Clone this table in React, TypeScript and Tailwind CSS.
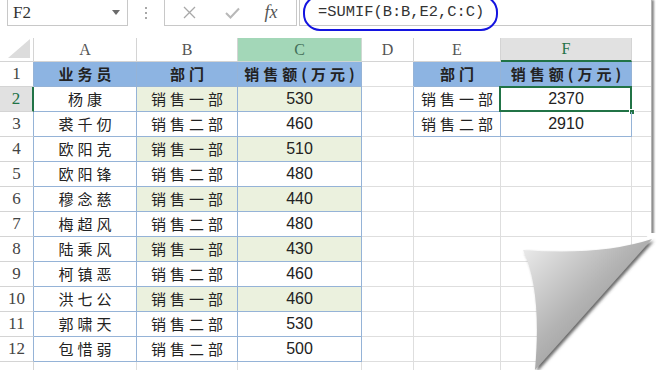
import * as React from "react";

type Row = { name: string; dept: string; amount: number };

const ROWS: Row[] = [
  { name: "杨康", dept: "销售一部", amount: 530 },
  { name: "裘千仞", dept: "销售二部", amount: 460 },
  { name: "欧阳克", dept: "销售一部", amount: 510 },
  { name: "欧阳锋", dept: "销售二部", amount: 480 },
  { name: "穆念慈", dept: "销售一部", amount: 440 },
  { name: "梅超风", dept: "销售二部", amount: 480 },
  { name: "陆乘风", dept: "销售一部", amount: 430 },
  { name: "柯镇恶", dept: "销售二部", amount: 460 },
  { name: "洪七公", dept: "销售一部", amount: 460 },
  { name: "郭啸天", dept: "销售二部", amount: 530 },
  { name: "包惜弱", dept: "销售二部", amount: 500 },
];

const SUMMARY = [
  { dept: "销售一部", total: 2370 },
  { dept: "销售二部", total: 2910 },
];

const CJK = "font-[family-name:'Noto_Sans_CJK_SC',sans-serif] text-[15px] tracking-[4px] pl-[4px]";
const NUM = "font-[family-name:'Liberation_Sans',sans-serif] text-[16px]";
const SERIF = "font-[family-name:'Liberation_Serif',serif]";

function Cell({ className = "", children }: { className?: string; children?: React.ReactNode }) {
  return (
    <div className={`flex h-[25px] items-center justify-center border-r border-b text-[#222] ${className}`}>
      {children}
    </div>
  );
}

function TopBar() {
  return (
    <div className="relative flex h-[26px] items-stretch">
      <div className="ml-[7px] flex w-[121px] items-center justify-between border-x border-b border-[#c8c8c8] pl-[5px] pr-[7px]">
        <span className={`${SERIF} text-[17px] text-[#333]`}>F2</span>
        <svg width="8" height="5" viewBox="0 0 8 5">
          <path d="M0 0 L8 0 L4 5 Z" fill="#6b6b6b" />
        </svg>
      </div>
      <div className="flex w-[36px] flex-col items-center justify-center gap-[3px]">
        <span className="h-[2px] w-[2px] bg-[#a8a8a8]" />
        <span className="h-[2px] w-[2px] bg-[#a8a8a8]" />
        <span className="h-[2px] w-[2px] bg-[#a8a8a8]" />
      </div>
      <div className="flex w-[133px] items-center border-x border-b border-[#c8c8c8]">
        <div className="flex w-[48px] justify-center">
          <svg width="13" height="13" viewBox="0 0 13 13">
            <path d="M1 1 L12 12 M12 1 L1 12" stroke="#a8a8a8" strokeWidth="1.3" />
          </svg>
        </div>
        <div className="flex w-[38px] justify-center">
          <svg width="15" height="12" viewBox="0 0 15 12">
            <path d="M1 6 L5.5 10.5 L14 1.5" stroke="#b8b8b8" strokeWidth="2" fill="none" />
          </svg>
        </div>
        <div className="flex w-[40px] justify-center">
          <span className={`${SERIF} text-[18px] italic text-[#555]`}>fx</span>
        </div>
      </div>
      <div className="ml-[2px] flex flex-1 items-center border-l border-b border-[#c8c8c8] pl-[18px]">
        <span className="font-[family-name:'Liberation_Mono',monospace] text-[15.4px] text-[#333]">=SUMIF(B:B,E2,C:C)</span>
      </div>
      <div className="absolute left-[303px] top-[-5px] h-[36px] w-[195px] rounded-[17px] border-2 border-[#1414e0]" />
    </div>
  );
}

function Sheet() {
  const colHead = `${SERIF} text-[16px] text-[#555]`;
  return (
    <div className="grid grid-cols-[34px_103px_101px_124px_52px_87px_131px_19px]">
      {/* column headers */}
      <div className="relative h-[24px] border-r border-b border-[#d4d4d4]">
        <svg className="absolute bottom-[3px] right-[3px]" width="22" height="19" viewBox="0 0 22 19">
          <path d="M22 0 L22 19 L0 19 Z" fill="#dcdcdc" />
        </svg>
      </div>
      <div className={`flex h-[24px] items-center justify-center border-r border-b border-[#d4d4d4] ${colHead}`}>A</div>
      <div className={`flex h-[24px] items-center justify-center border-r border-b border-[#d4d4d4] ${colHead}`}>B</div>
      <div className={`flex h-[24px] items-center justify-center border-r border-b border-[#cfd8d2] bg-[#a3d7b8] ${SERIF} text-[16px] text-[#44705a]`}>C</div>
      <div className={`flex h-[24px] items-center justify-center border-r border-b border-[#d4d4d4] ${colHead}`}>D</div>
      <div className={`flex h-[24px] items-center justify-center border-r border-b border-[#d4d4d4] ${colHead}`}>E</div>
      <div className={`flex h-[24px] items-center justify-center border-r border-b-2 border-r-[#d4d4d4] border-b-[#217346] bg-[#e1e1e1] ${SERIF} text-[16px] text-[#217346]`}>F</div>
      <div className="h-[24px] border-b border-[#d4d4d4]" />

      {/* row 1: headers */}
      <Cell className={`border-[#95b3d7] border-b-[#d4d4d4] ${SERIF} text-[17px] !text-[#444]`}>1</Cell>
      <Cell className={`border-[#95b3d7] bg-[#8db4e2] ${CJK} font-bold`}>业务员</Cell>
      <Cell className={`border-[#95b3d7] bg-[#8db4e2] ${CJK} font-bold`}>部门</Cell>
      <Cell className={`border-[#95b3d7] bg-[#8db4e2] ${CJK} font-bold tracking-[2px] pl-[2px]`}>销售额(万元)</Cell>
      <Cell className="border-r-[#95b3d7] border-b-[#dedede]" />
      <Cell className={`border-[#95b3d7] bg-[#8db4e2] ${CJK} font-bold`}>部门</Cell>
      <Cell className={`border-[#95b3d7] bg-[#8db4e2] ${CJK} font-bold tracking-[2px] pl-[2px]`}>销售额(万元)</Cell>
      <Cell className="border-[#dedede] border-r-0" />

      {ROWS.map((r, i) => {
        const n = i + 2;
        const one = r.dept === "销售一部";
        const tint = one ? "bg-[#ebf1de]" : "bg-white";
        const sum = SUMMARY[i];
        return (
          <React.Fragment key={n}>
            {n === 2 ? (
              <Cell className={`border-r-2 border-r-[#217346] border-b-[#d4d4d4] bg-[#e1e1e1] ${SERIF} text-[17px] !text-[#217346]`}>{n}</Cell>
            ) : (
              <Cell className={`border-r-[#95b3d7] border-b-[#d4d4d4] ${SERIF} text-[17px] !text-[#444]`}>{n}</Cell>
            )}
            <Cell className={`border-[#95b3d7] ${CJK}`}>{r.name}</Cell>
            <Cell className={`border-[#95b3d7] ${tint} ${CJK}`}>{r.dept}</Cell>
            <Cell className={`border-[#95b3d7] ${tint} ${NUM}`}>{r.amount}</Cell>
            {sum ? (
              <>
                <Cell className="border-r-[#95b3d7] border-b-[#dedede]" />
                <Cell className={`border-[#95b3d7] ${CJK}`}>{sum.dept}</Cell>
                <Cell className={`relative border-[#95b3d7] ${NUM}`}>
                  {sum.total}
                  {i === 0 ? (
                    <>
                      <div className="absolute left-[-2px] top-[-1px] h-[26px] w-[133px] border-2 border-[#217346]" />
                      <div className="absolute bottom-[-4px] right-[-4px] h-[6px] w-[6px] border border-white bg-[#217346]" />
                    </>
                  ) : null}
                </Cell>
              </>
            ) : (
              <>
                <Cell className="border-[#dedede]" />
                <Cell className="border-[#dedede]" />
                <Cell className="border-[#dedede]" />
              </>
            )}
            <Cell className="border-[#dedede] border-r-0" />
          </React.Fragment>
        );
      })}

      {/* row 13, cut off */}
      <Cell className="border-[#d4d4d4]" />
      <Cell className="border-[#dedede]" />
      <Cell className="border-[#dedede]" />
      <Cell className="border-[#dedede]" />
      <Cell className="border-[#dedede]" />
      <Cell className="border-[#dedede]" />
      <Cell className="border-[#dedede]" />
      <Cell className="border-[#dedede] border-r-0" />
    </div>
  );
}

function PageCurl() {
  return (
    <svg className="absolute left-[500px] top-[225px]" width="157" height="145" viewBox="0 0 157 145">
      <defs>
        <linearGradient id="curl" x1="0" y1="0" x2="1" y2="1">
          <stop offset="0" stopColor="#efefef" />
          <stop offset="0.45" stopColor="#b4b4b4" />
          <stop offset="1" stopColor="#7c7c7c" />
        </linearGradient>
        <filter id="sh" x="-20%" y="-20%" width="140%" height="140%">
          <feDropShadow dx="2" dy="2" stdDeviation="1.4" floodColor="#444" floodOpacity="0.8" />
        </filter>
      </defs>
      <path d="M150 8 L157 8 L157 145 L32 145 Z" fill="#ffffff" />
      <path d="M23 25 Q100 31 152 14 L35 145 Q42 65 23 25 Z" fill="url(#curl)" filter="url(#sh)" />
    </svg>
  );
}

export default function App() {
  return (
    <div className="relative h-[370px] w-[657px] overflow-hidden bg-white">
      <div className="h-full w-[652px] overflow-hidden border-r border-[#b5b5b5] shadow-[2px_0_2px_#8a8a8a]">
        <TopBar />
        <div className="h-[12px]" />
        <Sheet />
      </div>
      <PageCurl />
    </div>
  );
}
